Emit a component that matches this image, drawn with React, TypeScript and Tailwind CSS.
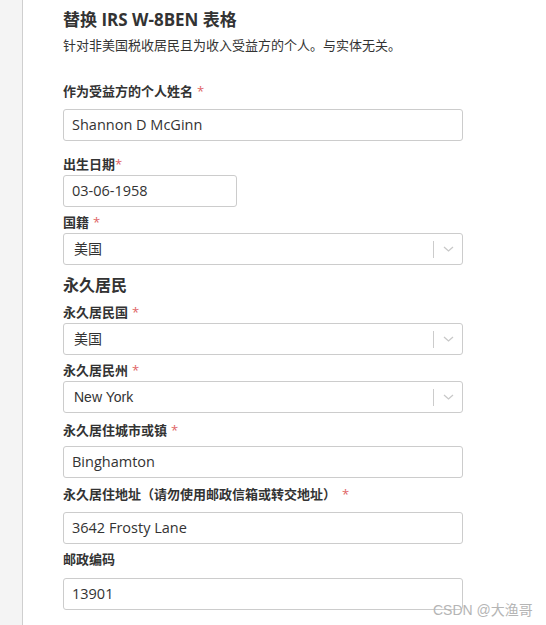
import React from "react";

const font = { fontFamily: '"Open Sans", "Noto Sans CJK SC", sans-serif' };

function Req({ gap = true }: { gap?: boolean }) {
  return <span className={`text-[#e06666] font-normal ${gap ? "ml-1" : ""}`}>*</span>;
}

function Label({ text, req = true, gap = true, className = "" }: { text: string; req?: boolean; gap?: boolean; className?: string }) {
  return (
    <div className={`text-[13px] leading-[18px] font-bold text-[#333] ${className}`}>
      {text}
      {req && <Req gap={gap} />}
    </div>
  );
}

function TextBox({ value, className = "" }: { value: string; className?: string }) {
  return (
    <div className={`h-[32px] border border-[#ccc] rounded-[3px] flex items-center pl-[8px] text-[14.5px] text-[#333] ${className}`}>
      {value}
    </div>
  );
}

function SelectBox({ value, className = "" }: { value: string; className?: string }) {
  return (
    <div className={`h-[32px] border border-[#ccc] rounded-[3px] flex items-center ${className}`}>
      <span
        className="flex-1 pl-[10px] text-[14px] text-[#333]"
        style={{ fontFamily: '"Liberation Sans", "Noto Sans CJK SC", sans-serif' }}
      >
        {value}
      </span>
      <span className="w-px h-[17px] bg-[#ccc]" />
      <span className="w-[28px] flex justify-center">
        <svg width="11" height="6" viewBox="0 0 11 6" fill="none">
          <path d="M1 1l4.5 4 4.5-4" stroke="#c8c8c8" strokeWidth="1.3" />
        </svg>
      </span>
    </div>
  );
}

export default function App() {
  return (
    <div className="relative flex min-h-[625px] bg-white" style={font}>
      <div className="w-[23px] bg-[#f4f4f4] border-r border-[#cfcfcf] shrink-0" />
      <div className="pl-[40px] w-[440px]">
        <h1 className="mt-[8px] text-[17px] leading-[24px] font-bold text-[#333]">替换 IRS W-8BEN 表格</h1>
        <p className="mt-[4px] text-[13px] leading-[18px] text-[#333]">针对非美国税收居民且为收入受益方的个人。与实体无关。</p>

        <Label text="作为受益方的个人姓名" className="mt-[28px]" />
        <TextBox value="Shannon D McGinn" className="mt-[9px]" />

        <Label text="出生日期" gap={false} className="mt-[14px]" />
        <TextBox value="03-06-1958" className="mt-[2px] w-[174px]" />

        <Label text="国籍" className="mt-[6px]" />
        <SelectBox value="美国" className="mt-[2px]" />

        <h2 className="mt-[8px] text-[16px] leading-[24px] font-semibold text-[#333]">永久居民</h2>

        <Label text="永久居民国" className="mt-[6px]" />
        <SelectBox value="美国" className="mt-[2px]" />

        <Label text="永久居民州" className="mt-[6px]" />
        <SelectBox value="New York" className="mt-[2px]" />

        <Label text="永久居住城市或镇" className="mt-[8px]" />
        <TextBox value="Binghamton" className="mt-[7px]" />

        <div className="mt-[7px] text-[13px] leading-[18px] font-bold text-[#333]">
          永久居住地址（请勿使用邮政信箱或转交地址）
          <span className="text-[#e06666] font-normal ml-[6px]">*</span>
        </div>
        <TextBox value="3642 Frosty Lane" className="mt-[9px]" />

        <Label text="邮政编码" req={false} className="mt-[6px]" />
        <TextBox value="13901" className="mt-[10px]" />
      </div>
      <div
        className="absolute left-[433px] top-[601px] text-[14px] leading-[18px] text-[#b5b5b5]"
        style={{ fontFamily: '"Liberation Sans", "Noto Sans CJK SC", sans-serif' }}
      >
        CSDN @大渔哥
      </div>
    </div>
  );
}
